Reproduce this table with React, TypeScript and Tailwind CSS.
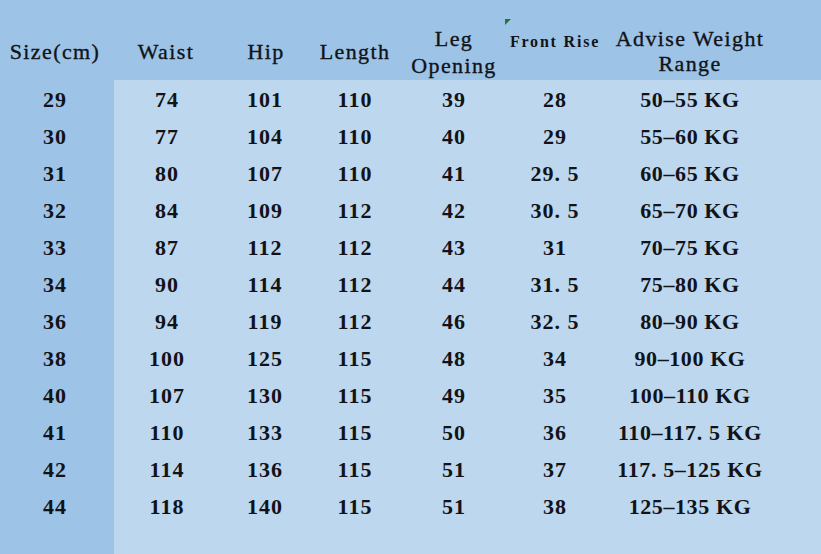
const rows: string[][] = [
  ['29', '74', '101', '110', '39', '28', '50–55 KG'],
  ['30', '77', '104', '110', '40', '29', '55–60 KG'],
  ['31', '80', '107', '110', '41', '29. 5', '60–65 KG'],
  ['32', '84', '109', '112', '42', '30. 5', '65–70 KG'],
  ['33', '87', '112', '112', '43', '31', '70–75 KG'],
  ['34', '90', '114', '112', '44', '31. 5', '75–80 KG'],
  ['36', '94', '119', '112', '46', '32. 5', '80–90 KG'],
  ['38', '100', '125', '115', '48', '34', '90–100 KG'],
  ['40', '107', '130', '115', '49', '35', '100–110 KG'],
  ['41', '110', '133', '115', '50', '36', '110–117. 5 KG'],
  ['42', '114', '136', '115', '51', '37', '117. 5–125 KG'],
  ['44', '118', '140', '115', '51', '38', '125–135 KG'],
];

const widths = ['w-[106px]', 'w-[90px]', 'w-[90px]', 'w-[108px]', 'w-[94px]', 'w-[176px] tracking-[0.6px]'];

const font = { fontFamily: '"Liberation Serif", "Times New Roman", serif' };

export default function App() {
  return (
    <div className="w-[821px] h-[554px] bg-[#bdd7ee] text-[#111318] flex flex-col overflow-hidden" style={font}>
      <div className="relative h-[80px] bg-[#9dc3e6] flex items-start text-[22px] tracking-[1.4px] leading-[26px] [-webkit-text-stroke:0.35px_#111318]">
        <div className="w-[110px] text-center mt-[39px]">Size(cm)</div>
        <div className="w-[112px] text-center mt-[39px]">Waist</div>
        <div className="w-[88px] text-center mt-[39px]">Hip</div>
        <div className="w-[90px] text-center mt-[39px]">Length</div>
        <div className="w-[108px] text-center mt-[25px] leading-[27px]">
          <div>Leg</div>
          <div>Opening</div>
        </div>
        <div className="w-[94px] text-center text-[16px] tracking-[1.8px] font-bold leading-[20px] mt-[32px] [-webkit-text-stroke:0px]">Front Rise</div>
        <div className="w-[176px] text-center leading-[25px] mt-[26px]">
          <div>Advise Weight</div>
          <div>Range</div>
        </div>
        <svg className="absolute left-[505px] top-[19px]" width="6" height="6" viewBox="0 0 6 6">
          <polygon points="0,0 6,0 0,6" fill="#1f7a2e" />
        </svg>
      </div>
      <div className="flex flex-1">
        <div className="w-[114px] bg-[#9dc3e6] pt-[1px]">
          {rows.map((r) => (
            <div key={r[0]} className="h-[37px] flex items-center justify-center text-[22px] font-bold tracking-[1px] pr-[4px]">
              {r[0]}
            </div>
          ))}
        </div>
        <div className="flex-1 pt-[1px]">
          {rows.map((r) => (
            <div key={r[0]} className="h-[37px] flex items-center text-[22px] font-bold tracking-[1px]">
              {r.slice(1).map((c, i) => (
                <div key={i} className={`${widths[i]} text-center whitespace-pre`}>
                  {c}
                </div>
              ))}
            </div>
          ))}
        </div>
      </div>
    </div>
  );
}
